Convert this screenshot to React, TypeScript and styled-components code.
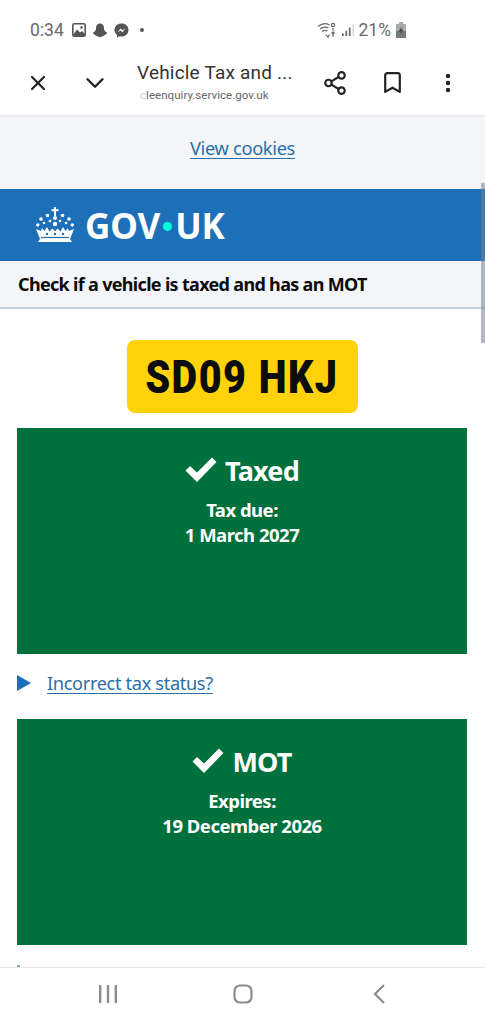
import React, { FunctionComponent } from 'react'
import styled, { createGlobalStyle } from 'styled-components'
import { X, ChevronDown, Share2, Bookmark } from 'lucide-react'

const GlobalStyle = createGlobalStyle`
    html, body {
        margin: 0;
        padding: 0;
        background: #fff;
    }
    * {
        box-sizing: border-box;
    }
`

const Phone = styled.div`
    width: 485px;
    height: 1024px;
    display: flex;
    flex-direction: column;
    overflow: hidden;
    background: #fff;
    font-family: 'Noto Sans', 'Lato', sans-serif;
`

const StatusBar = styled.div`
    height: 50px;
    flex: none;
    padding: 10px 79px 0 30px;
    display: flex;
    align-items: center;
    justify-content: space-between;
    color: #6a6a6a;
    font-family: 'Roboto', sans-serif;
    font-size: 17.5px;
`

const StatusGroup = styled.div<{ $gap: number }>`
    display: flex;
    align-items: center;
    gap: ${props => props.$gap}px;
`

const StatusTime = styled.span`
    margin-right: 2px;
`

const BrowserBar = styled.div`
    height: 67px;
    flex: none;
    display: grid;
    grid-template-columns: 137px 170px 1fr;
    align-items: center;
    border-bottom: 2px solid #e9ebee;
`

const BarIcons = styled.div<{ $gap: number; $pad: number }>`
    display: flex;
    align-items: center;
    gap: ${props => props.$gap}px;
    padding-left: ${props => props.$pad}px;
    color: #222;
`

const MenuDots = styled.svg`
    margin-left: 6px;
    fill: #222;
`

const TitleBlock = styled.div`
    display: flex;
    flex-direction: column;
    gap: 3px;
    padding-bottom: 1px;
    font-family: 'Roboto', sans-serif;
    white-space: nowrap;
`

const PageTitle = styled.div`
    font-size: 19px;
    line-height: 24px;
    letter-spacing: 0.2px;
    color: #333;
`

const PageUrl = styled.div`
    font-size: 11.6px;
    line-height: 15px;
    padding-left: 3px;
    color: #666;
`

const FadedChar = styled.span`
    opacity: 0.3;
`

const Content = styled.div`
    flex: 1;
    min-height: 0;
    position: relative;
    overflow: hidden;
`

const CookieBand = styled.div`
    height: 72px;
    display: flex;
    align-items: center;
    justify-content: center;
    padding-bottom: 12px;
    background: #f3f5f7;
`

const BlueLink = styled.a<{ $size: number }>`
    color: #2a6fa8;
    font-size: ${props => props.$size}px;
    letter-spacing: -0.35px;
    text-decoration: underline;
    text-underline-offset: 3px;
    text-decoration-thickness: 1px;
`

const GovHeader = styled.div`
    height: 72px;
    display: flex;
    align-items: center;
    gap: 10px;
    padding: 0 0 0 35px;
    background: #1d70b8;
    color: #fff;
`

const GovWord = styled.div`
    display: flex;
    align-items: center;
    font-size: 35px;
    font-weight: 700;
    letter-spacing: -0.1px;
`

const GovDot = styled.span`
    width: 9px;
    height: 9px;
    margin: 2px 3px 0;
    border-radius: 50%;
    background: #00ffe0;
`

const ServiceBar = styled.div`
    height: 48px;
    padding-left: 18px;
    display: flex;
    align-items: center;
    background: #f3f5f8;
    border-bottom: 2px solid #c6d0d8;
    color: #0b0c0c;
    font-size: 18px;
    font-weight: 700;
    letter-spacing: -0.68px;
`

const Main = styled.div`
    padding: 31px 18px 0 17px;
    display: flex;
    flex-direction: column;
`

const Plate = styled.div`
    align-self: center;
    width: 231px;
    height: 73px;
    margin-bottom: 15px;
    display: flex;
    align-items: center;
    justify-content: center;
    border-radius: 8px;
    background: #ffd20a;
    color: #0b0c0c;
    font-family: 'Roboto', sans-serif;
    font-size: 47px;
    font-weight: 900;
    white-space: nowrap;
`

const PlateText = styled.span`
    transform: scaleX(0.84);
    letter-spacing: 1.8px;
`

const StatusCard = styled.div`
    height: 226px;
    padding-top: 24px;
    display: flex;
    flex-direction: column;
    align-items: center;
    background: #00703c;
    color: #fff;
    font-weight: 700;
`

const CardHeading = styled.div`
    display: flex;
    align-items: center;
    gap: 8px;
    height: 36px;
    margin-bottom: 9px;
    font-size: 27px;
    letter-spacing: -0.8px;
`

const CardLine = styled.div`
    font-size: 18.5px;
    line-height: 25px;
    letter-spacing: -0.5px;
`

const DetailsRow = styled.div`
    height: 65px;
    display: flex;
    align-items: center;
    gap: 16px;
    padding-bottom: 8px;
`

const Triangle = styled.span`
    width: 0;
    height: 0;
    border-style: solid;
    border-width: 8px 0 8px 14px;
    border-color: transparent transparent transparent #1d70b8;
`

const Scrollbar = styled.div`
    position: absolute;
    top: 66px;
    right: 0;
    width: 4px;
    height: 160px;
    background: rgba(120, 130, 140, 0.55);
`

const StrayMark = styled.span`
    position: absolute;
    left: 17px;
    bottom: 0;
    width: 3px;
    height: 2px;
    background: #8a9fb8;
`

const NavBar = styled.div`
    height: 57px;
    flex: none;
    display: grid;
    grid-template-columns: repeat(3, 1fr);
    padding: 0 38px 5px 40px;
    align-items: center;
    justify-items: center;
    border-top: 1px solid #e8e8e8;
    color: #8c8c8c;
`

const StatusIcon = styled.svg`
    display: block;
    flex: none;
`

const Crown = () => (
    <svg width="40" height="38" viewBox="0 0 40 38" fill="#fff">
        <rect x="19" y="1" width="2" height="9" />
        <rect x="16.5" y="3.2" width="7" height="2" />
        <circle cx="20" cy="12" r="2" />
        <circle cx="12.5" cy="9.5" r="1.8" />
        <circle cx="27.5" cy="9.5" r="1.8" />
        <circle cx="6" cy="13" r="1.8" />
        <circle cx="34" cy="13" r="1.8" />
        <circle cx="2.8" cy="19" r="1.7" />
        <circle cx="37.2" cy="19" r="1.7" />
        <circle cx="9" cy="17" r="1.3" />
        <circle cx="31" cy="17" r="1.3" />
        <circle cx="15" cy="15" r="1.3" />
        <circle cx="25" cy="15" r="1.3" />
        <circle cx="20" cy="18" r="2.2" />
        <path d="M1 23 L6 25 L7 22 L9.5 25 L12 21 L14.5 25.5 L17.5 22.5 L20 25.5 L22.5 22.5 L25.5 25.5 L28 21 L30.5 25 L33 22 L34 25 L39 23 L35 33 L37 36 H3 L5 33 Z" />
        <path d="M6 31.5 H34" stroke="#1d70b8" strokeWidth="1.2" />
        <circle cx="12" cy="28" r="1.2" fill="#1d70b8" />
        <circle cx="20" cy="28" r="1.2" fill="#1d70b8" />
        <circle cx="28" cy="28" r="1.2" fill="#1d70b8" />
    </svg>
)

const Check = () => (
    <svg width="32" height="26" viewBox="0 0 32 26" fill="#fff">
        <path d="M0.5 13.5 L5 9 L12 15.5 L27 0.5 L31.5 5 L12 25 Z" />
    </svg>
)

const StatusCardBlock: FunctionComponent<{ title: string; label: string; date: string }> = ({ title, label, date }) => (
    <StatusCard>
        <CardHeading>
            <Check />
            {title}
        </CardHeading>
        <CardLine>{label}</CardLine>
        <CardLine>{date}</CardLine>
    </StatusCard>
)

const App = () => (
    <Phone>
        <GlobalStyle />
        <StatusBar>
            <StatusGroup $gap={6}>
                <StatusTime>0:34</StatusTime>
                <StatusIcon width="14" height="14" viewBox="0 0 14 14">
                    <rect x="0.8" y="0.8" width="12.4" height="12.4" rx="1.5" fill="none" stroke="#555" strokeWidth="1.6" />
                    <path d="M1 12 L5 6.5 L8 9.5 L10 8 L13 11 V13 H1 Z" fill="#555" />
                    <circle cx="9.5" cy="4.5" r="1.3" fill="#555" />
                </StatusIcon>
                <StatusIcon width="16" height="15" viewBox="0 0 16 15">
                    <path d="M8 0.5 C11 0.5 12 3 12 5.5 C12 7.5 13 8.5 15 9.5 C15 11 13.5 11 13 12 C12 13 11 13 10 13.5 C9 14.5 7 14.5 6 13.5 C5 13 4 13 3 12 C2.5 11 1 11 1 9.5 C3 8.5 4 7.5 4 5.5 C4 3 5 0.5 8 0.5 Z" fill="#555" />
                </StatusIcon>
                <StatusIcon width="15" height="15" viewBox="0 0 15 15">
                    <path d="M7.5 0.5 C11.5 0.5 14.5 3.2 14.5 7 C14.5 10.8 11.5 13.5 7.5 13.5 L5.5 13.3 L3 14.8 V12 C1.4 10.8 0.5 9 0.5 7 C0.5 3.2 3.5 0.5 7.5 0.5 Z" fill="#555" />
                    <path d="M3.5 9.2 L6.5 5.5 L8.5 7.3 L11.5 5.5 L8.5 9.2 L6.5 7.4 Z" fill="#fff" />
                </StatusIcon>
                <StatusIcon width="16" height="6" viewBox="0 0 16 6">
                    <circle cx="7" cy="3" r="2" fill="#555" />
                </StatusIcon>
            </StatusGroup>
            <StatusGroup $gap={5}>
                <StatusIcon width="20" height="16" viewBox="0 0 20 16" fill="none" stroke="#666" strokeWidth="1.2">
                    <path d="M1 4.5 C4.5 1.5 9 1 12.5 3" />
                    <path d="M3 7 C5.5 5 8.5 4.5 11.5 6" />
                    <path d="M5 9.5 C6.5 8.3 8.5 8 10.5 9" />
                    <circle cx="16" cy="3" r="1.6" />
                    <path d="M16 6 V9 M9 13 L11 15 L12.5 12.5 M16 15 V10 M14.5 11.5 L16 10 L17.5 11.5" />
                </StatusIcon>
                <StatusIcon width="12" height="14" viewBox="0 0 14 14" fill="#666">
                    <rect x="0" y="11" width="2" height="3" />
                    <rect x="4" y="8" width="2" height="6" />
                    <rect x="8" y="4" width="2" height="10" />
                    <rect x="12.5" y="0" width="1" height="14" fill="#bbb" />
                </StatusIcon>
                <span>21%</span>
                <StatusIcon width="10" height="16" viewBox="0 0 10 16">
                    <path d="M3 0 H7 V2 H10 V16 H0 V2 H3 Z" fill="#aaa" />
                    <rect x="0" y="9" width="10" height="7" fill="#777" />
                    <path d="M6 4 L2.5 9.5 H5 L4 13 L7.5 7.5 H5 Z" fill="#444" />
                </StatusIcon>
            </StatusGroup>
        </StatusBar>
        <BrowserBar>
            <BarIcons $gap={30} $pad={26}>
                <X size={24} strokeWidth={2.2} />
                <ChevronDown size={30} strokeWidth={1.9} />
            </BarIcons>
            <TitleBlock>
                <PageTitle>Vehicle Tax and ...</PageTitle>
                <PageUrl><FadedChar>c</FadedChar>leenquiry.service.gov.uk</PageUrl>
            </TitleBlock>
            <BarIcons $gap={32} $pad={15}>
                <Share2 size={26} strokeWidth={2} />
                <Bookmark size={25} strokeWidth={2.1} />
                <MenuDots width="10" height="20" viewBox="0 0 10 20">
                    <circle cx="5" cy="3" r="2.2" />
                    <circle cx="5" cy="10" r="2.2" />
                    <circle cx="5" cy="17" r="2.2" />
                </MenuDots>
            </BarIcons>
        </BrowserBar>
        <Content>
            <CookieBand>
                <BlueLink $size={18.3}>View cookies</BlueLink>
            </CookieBand>
            <GovHeader>
                <Crown />
                <GovWord>
                    GOV<GovDot />UK
                </GovWord>
            </GovHeader>
            <ServiceBar>Check if a vehicle is taxed and has an MOT</ServiceBar>
            <Main>
                <Plate><PlateText>SD09 HKJ</PlateText></Plate>
                <StatusCardBlock title="Taxed" label="Tax due:" date="1 March 2027" />
                <DetailsRow>
                    <Triangle />
                    <BlueLink $size={18.2}>Incorrect tax status?</BlueLink>
                </DetailsRow>
                <StatusCardBlock title="MOT" label="Expires:" date="19 December 2026" />
            </Main>
            <Scrollbar />
            <StrayMark />
        </Content>
        <NavBar>
            <svg width="20" height="20" viewBox="0 0 20 20" fill="#8c8c8c">
                <rect x="1" y="1" width="2.4" height="18" />
                <rect x="8.8" y="1" width="2.4" height="18" />
                <rect x="16.6" y="1" width="2.4" height="18" />
            </svg>
            <svg width="20" height="20" viewBox="0 0 20 20" fill="none" stroke="#8c8c8c" strokeWidth="2.2">
                <rect x="1.5" y="1.5" width="17" height="17" rx="5.5" />
            </svg>
            <svg width="13" height="20" viewBox="0 0 13 20" fill="none" stroke="#8c8c8c" strokeWidth="2.2">
                <path d="M11 1 L2 10 L11 19" />
            </svg>
        </NavBar>
    </Phone>
)

export default App
